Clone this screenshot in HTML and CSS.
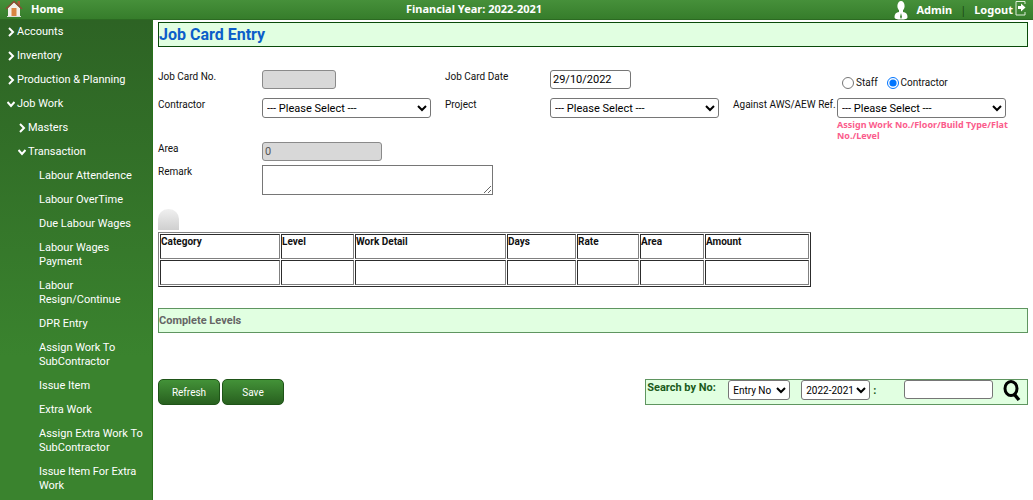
FILE: index.html
```html
<!DOCTYPE html>
<html lang="en">
<head>
  <meta charset="UTF-8">
  <title>Job Card Entry</title>
  <link rel="stylesheet" href="styles.css">
</head>
<body>
  <!-- top bar -->
  <header class="topbar">
    <a class="home" href="#">
      <svg width="18" height="18" viewBox="0 0 18 18">
        <path d="M3 8 L9 2 L15 8 V16 H3 Z" fill="#f3f0ea"/>
        <path d="M12.500 1 H15 V6 L12.500 4 Z" fill="#b5583a"/>
        <path d="M1 9 L9 1.500 L17 9" fill="none" stroke="#8f4a34" stroke-width="1.600"/>
        <rect x="6.500" y="8" width="5" height="8" fill="#d98543"/>
        <path d="M2 16.500 H16" stroke="#ddd"/>
      </svg>
      Home
    </a>
    <div class="year">Financial Year: 2022-2021</div>
    <div class="user">
      <svg class="person" width="14" height="19" viewBox="0 0 14 19">
        <ellipse cx="7" cy="5" rx="3.600" ry="5" fill="#fff"/>
        <path d="M5 8 H9 V11 C12 11.500 13.500 13 13.500 16 C13.500 18 11 18.500 7 18.500 C3 18.500 0.500 18 0.500 16 C0.500 13 2 11.500 5 11 Z" fill="#fff"/>
        <path d="M7 12 L6 16 L7 18 L8 16 Z" fill="#3c8430"/>
      </svg>
      <a href="#">Admin</a>
      <span class="bar">|</span>
      <a href="#">Logout</a>
      <svg class="exit" width="12" height="15" viewBox="0 0 12 15">
        <path d="M1 4 V0.500 H10 V3 M1 10 V14 H10 V11" fill="none" stroke="#dfeeda" stroke-width="1"/>
        <path d="M1 4 V10" stroke="#dfeeda"/>
        <path d="M3 5 H6 V2.500 L10.500 6.500 L6 10.500 V8 H3 Z" fill="#fff"/>
      </svg>
    </div>
  </header>

  <div class="wrapper">
    <!-- left menu -->
    <nav class="sidebar">
      <a class="lvl1" href="#"><svg class="arrow" viewBox="0 0 8 10"><path d="M2 1 L6 5 L2 9"/></svg>Accounts</a>
      <a class="lvl1" href="#"><svg class="arrow" viewBox="0 0 8 10"><path d="M2 1 L6 5 L2 9"/></svg>Inventory</a>
      <a class="lvl1" href="#"><svg class="arrow" viewBox="0 0 8 10"><path d="M2 1 L6 5 L2 9"/></svg>Production &amp; Planning</a>
      <a class="lvl1" href="#"><svg class="arrow" viewBox="0 0 8 10"><path d="M0.500 3 L4 7 L7.500 3"/></svg>Job Work</a>
      <a class="lvl2" href="#"><svg class="arrow" viewBox="0 0 8 10"><path d="M2 1 L6 5 L2 9"/></svg>Masters</a>
      <a class="lvl2" href="#"><svg class="arrow" viewBox="0 0 8 10"><path d="M0.500 3 L4 7 L7.500 3"/></svg>Transaction</a>
      <a class="lvl3" href="#">Labour Attendence</a>
      <a class="lvl3" href="#">Labour OverTime</a>
      <a class="lvl3" href="#">Due Labour Wages</a>
      <a class="lvl3" href="#">Labour Wages<br>Payment</a>
      <a class="lvl3" href="#">Labour<br>Resign/Continue</a>
      <a class="lvl3" href="#">DPR Entry</a>
      <a class="lvl3" href="#">Assign Work To<br>SubContractor</a>
      <a class="lvl3" href="#">Issue Item</a>
      <a class="lvl3" href="#">Extra Work</a>
      <a class="lvl3" href="#">Assign Extra Work To<br>SubContractor</a>
      <a class="lvl3" href="#">Issue Item For Extra<br>Work</a>
    </nav>

    <!-- page -->
    <main class="content">
      <h1>Job Card Entry</h1>

      <form>
        <div class="fields">
          <label for="cardNo">Job Card No.</label>
          <div><input type="text" id="cardNo" class="w-small" disabled></div>
          <label for="cardDate">Job Card Date</label>
          <div><input type="text" id="cardDate" class="w-date" value="29/10/2022"></div>
          <div></div>
          <div class="radios">
            <input type="radio" name="type" id="staff"><label for="staff">Staff</label>
            <input type="radio" name="type" id="contractorType" checked><label for="contractorType">Contractor</label>
          </div>

          <label for="contractor">Contractor</label>
          <div><select id="contractor" class="w-select"><option>--- Please Select ---</option></select></div>
          <label for="project">Project</label>
          <div><select id="project" class="w-select"><option>--- Please Select ---</option></select></div>
          <label for="ref">Against AWS/AEW Ref.</label>
          <div>
            <select id="ref" class="w-select"><option>--- Please Select ---</option></select>
            <div class="hint">Assign Work No./Floor/Build Type/Flat No./Level</div>
          </div>
        </div>

        <div class="fields lower">
          <label for="area">Area</label>
          <div><input type="text" id="area" class="w-area" value="0" disabled></div>
        </div>
        <div class="fields lower">
          <label for="remark">Remark</label>
          <div class="wide"><textarea id="remark"></textarea></div>
        </div>

        <div class="tab"></div>

        <table class="work">
          <tr>
            <th class="c1">Category</th>
            <th class="c2">Level</th>
            <th class="c3">Work Detail</th>
            <th class="c4">Days</th>
            <th class="c5">Rate</th>
            <th class="c6">Area</th>
            <th class="c7">Amount</th>
          </tr>
          <tr><td></td><td></td><td></td><td></td><td></td><td></td><td></td></tr>
        </table>

        <h2>Complete Levels</h2>

        <div class="footer">
          <div class="buttons">
            <button type="button">Refresh</button>
            <button type="button">Save</button>
          </div>
          <div class="search">
            <label for="searchBy">Search by No:</label>
            <select id="searchBy" class="w-by"><option>Entry No</option></select>
            <select class="w-year" aria-label="Year"><option>2022-2021</option></select>
            <span>:</span>
            <input type="text" class="w-find" aria-label="Number">
            <button type="button" class="find" aria-label="Search">
              <svg width="18" height="22" viewBox="0 0 18 22">
                <ellipse cx="8" cy="8.500" rx="6" ry="7" fill="none" stroke="#000" stroke-width="3"/>
                <path d="M11 14 L16 20" stroke="#000" stroke-width="3.500"/>
              </svg>
            </button>
          </div>
        </div>
      </form>
    </main>
  </div>
</body>
</html>
```
FILE: styles.css
```css
* {
  box-sizing: border-box;
}

body {
  margin: 0;
  font-family: Roboto, Arial, sans-serif;
  font-size: 11px;
  line-height: 14px;
  color: #111;
  background: #fff;
}

a {
  color: #fff;
  text-decoration: none;
}

/* top bar */
.topbar {
  display: grid;
  grid-template-columns: 1fr auto 1fr;
  align-items: center;
  height: 20px;
  padding: 0 6px 0 5px;
  background: linear-gradient(#46903a, #367d2b);
  border-bottom: 1px solid #2c6a22;
  color: #fff;
  font-family: "Noto Sans", Tahoma, sans-serif;
  font-size: 11px;
  font-weight: bold;
}

.home {
  display: flex;
  align-items: center;
  gap: 8px;
  padding-bottom: 2px;
}

.year {
  padding-right: 84px;
  padding-bottom: 2px;
}

.user {
  display: flex;
  justify-content: flex-end;
  align-items: center;
  gap: 8px;
}

.bar {
  color: #1c4a15;
  font-weight: normal;
}

.exit {
  margin-left: -6px;
  margin-bottom: 4px;
}

.wrapper {
  display: flex;
  min-height: calc(100vh - 20px);
}

/* left menu */
.sidebar {
  flex: 0 0 153px;
  background: linear-gradient(#2d6324, #3a832e 70%);
  border-right: 1px solid #28701c;
}

.sidebar a {
  display: flex;
  align-items: center;
  padding: 5px 0;
}

.sidebar .lvl1 {
  padding-left: 7px;
}

.sidebar .lvl2 {
  padding-left: 18px;
}

.sidebar .lvl3 {
  padding-left: 39px;
}

.arrow {
  width: 8px;
  height: 10px;
  margin-right: 2px;
  fill: none;
  stroke: #fff;
  stroke-width: 2;
}

/* page */
.content {
  flex: 1;
  min-width: 0;
  padding: 2px 5px 0;
}

h1,
h2 {
  margin: 0;
  height: 25px;
  background: #e1ffe1;
  border: 1px solid #0a4a0a;
}

h1 {
  color: #0b5ec9;
  font-size: 16px;
  line-height: 23px;
}

h2 {
  margin-top: 21px;
  border-color: #5f9560;
  color: #666;
  font-size: 11px;
  line-height: 24px;
}

.fields {
  display: grid;
  grid-template-columns: 104fr 183fr 105fr 183fr 104fr 191fr;
  row-gap: 8px;
  margin-top: 23px;
}

.fields label {
  font-size: 10px;
  white-space: nowrap;
}

.fields.lower {
  margin-top: 0;
}

.fields.lower > div {
  margin-bottom: 4px;
}

.fields .wide {
  grid-column: 2 / -1;
}

input[type="text"],
select,
textarea {
  display: block;
  max-width: 100%;
  margin: 0;
  border: 1px solid #767676;
  border-radius: 3px;
  background: #fff;
  color: #000;
  font-family: inherit;
  font-size: 11px;
}

input[type="text"] {
  height: 19px;
  padding: 1px 2px;
}

input[type="text"]:disabled {
  background: #d8d8d8;
  border-color: #8a8a8a;
  color: #555;
}

select {
  height: 20px;
  padding: 0;
}

textarea {
  width: 231px;
  height: 30px;
  border-radius: 0;
}

.w-small { width: 74px; }
.w-date { width: 81px; }
.w-select { width: 169px; }
.w-area { width: 120px; }
.w-by { width: 62px; }
.w-year { width: 69px; }
.w-find { width: 89px; }

.radios {
  display: flex;
  align-items: center;
  padding: 6px 0 0 5px;
}

.radios input {
  width: 12px;
  height: 12px;
  margin: 0 2px 0 0;
}

.radios label {
  margin-right: 9px;
}

.hint {
  margin-top: 1px;
  margin-bottom: 1px;
  color: #fb5c8c;
  font-family: "Noto Sans", sans-serif;
  font-size: 9px;
  font-weight: bold;
  line-height: 11px;
}

.tab {
  width: 21px;
  height: 21px;
  margin: 10px 0 2px;
  border-radius: 10px 10px 0 0;
  background: linear-gradient(#f0f0f0, #cfcfcf);
}

/* work table */
.work {
  width: 75%;
  table-layout: fixed;
  border: 1px outset #808080;
  border-spacing: 1px;
  font-size: 10px;
}

.work th,
.work td {
  height: 25px;
  padding: 0;
  border: 1px inset #808080;
  text-align: left;
  vertical-align: top;
}

.c1 { width: 120px; }
.c2 { width: 73px; }
.c3 { width: 151px; }
.c4 { width: 69px; }
.c5 { width: 62px; }
.c6 { width: 64px; }

/* buttons and search */
.footer {
  display: flex;
  justify-content: space-between;
  margin-top: 46px;
}

.buttons {
  display: flex;
  gap: 2px;
}

.buttons button {
  width: 62px;
  height: 26px;
  padding: 0;
  border: 1px solid #1f5418;
  border-radius: 5px;
  background: linear-gradient(#439238, #28601f);
  color: #fff;
  font-family: inherit;
  font-size: 10px;
}

.search {
  display: flex;
  width: 44%;
  height: 26px;
  padding-left: 1px;
  background: #e1ffe1;
  border: 1px solid #5f9560;
  color: #1b5a1b;
  font-weight: bold;
}

.search label {
  width: 81px;
  line-height: 16px;
}

.search select {
  font-size: 10px;
}

.search .w-year {
  margin-left: 11px;
}

.search span {
  margin-left: 3px;
  line-height: 22px;
}

.search .w-find {
  margin-left: auto;
}

.find {
  width: 18px;
  margin: 0 6px 0 10px;
  padding: 0;
  border: 0;
  background: none;
}
```
